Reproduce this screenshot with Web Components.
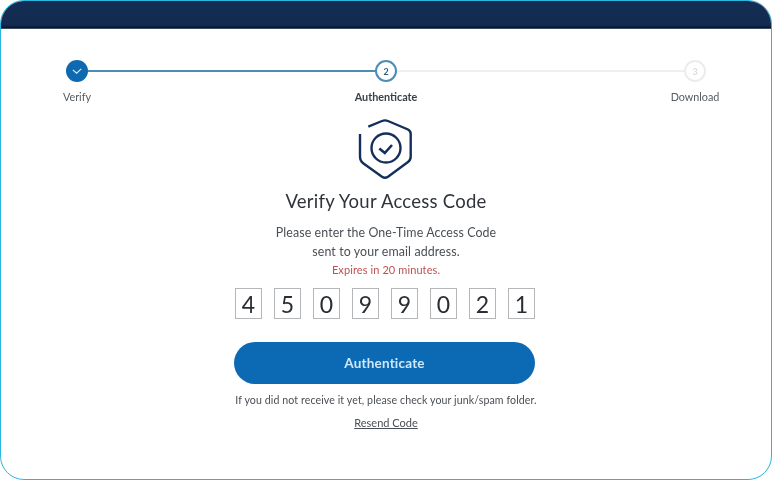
<!DOCTYPE html>
<html>
<head>
<meta charset="utf-8">
<style>
  html, body { margin: 0; height: 100%; background: #fff; }
  body { font-family: Lato, "Open Sans", sans-serif; color: #33383f; }
</style>
</head>
<body>
<verify-card>
  <step-bar></step-bar>
  <shield-icon></shield-icon>
  <code-intro></code-intro>
  <code-boxes code="45099021"></code-boxes>
  <auth-button>Authenticate</auth-button>
  <code-help></code-help>
</verify-card>

<script>
class VerifyCard extends HTMLElement {
    constructor() {
        super();
        this.attachShadow({mode: "open"}).innerHTML = `
        <style>
            :host {
                display: block;
                box-sizing: border-box;
                width: 772px;
                height: 480px;
                border: 1px solid #2bb6e0;
                border-radius: 24px;
                overflow: hidden;
                background: #fff;
            }
            .top {
                height: 28px;
                background: linear-gradient(#142d54 0, #132b50 24px, #04152f 27px, #6f8198 28px);
            }
            .content {
                display: flex;
                flex-direction: column;
                align-items: center;
                filter: blur(0.5px);
            }
        </style>
        <div class="top"></div>
        <div class="content"><slot></slot></div>`;
    }
}
customElements.define("verify-card", VerifyCard);

class StepBar extends HTMLElement {
    constructor() {
        super();
        this.attachShadow({mode: "open"}).innerHTML = `
        <style>
            :host {
                display: flex;
                box-sizing: border-box;
                width: 100%;
                height: 72px;
                padding: 31px 65px 0 65px;
                font-size: 10.8px;
                color: #555a60;
            }
            .step {
                width: 22px;
                display: flex;
                flex-direction: column;
                align-items: center;
                white-space: nowrap;
            }
            .dot {
                box-sizing: border-box;
                width: 22px;
                height: 22px;
                flex: none;
                border-radius: 50%;
                display: flex;
                align-items: center;
                justify-content: center;
                font-size: 9px;
                font-weight: 700;
            }
            .done { background: #0f69b0; }
            .now { border: 2px solid #4d8cb5; color: #2f5f85; background: #fff; }
            .later { border: 2px solid #ececec; color: #dcdcdc; background: #fff; }
            .label { margin-top: 9px; line-height: 12px; }
            .now + .label { font-weight: 700; color: #3a3f46; }
            .line { flex: 1; height: 2px; margin-top: 10px; }
            .blue { background: #4d8cb5; }
            .grey { background: #f0f0f0; }
        </style>
        <div class="step">
            <div class="dot done">
                <svg width="12" height="12" viewBox="0 0 12 12" fill="none" stroke="#dff1fb" stroke-width="1.1"><path d="M1.8 4.8 L5.6 8.2 L10.2 3.8"/></svg>
            </div>
            <div class="label">Verify</div>
        </div>
        <div class="line blue"></div>
        <div class="step">
            <div class="dot now">2</div>
            <div class="label">Authenticate</div>
        </div>
        <div class="line grey"></div>
        <div class="step">
            <div class="dot later">3</div>
            <div class="label">Download</div>
        </div>`;
    }
}
customElements.define("step-bar", StepBar);

class ShieldIcon extends HTMLElement {
    constructor() {
        super();
        this.attachShadow({mode: "open"}).innerHTML = `
        <style>
            :host { display: block; width: 56px; height: 62px; margin-top: 18px; }
            svg { display: block; }
        </style>
        <svg width="56" height="62" viewBox="0 0 56 62" fill="none" stroke="#142f5c" stroke-width="2.4">
            <path d="M10.3 7.7 L24 2 Q27 0.8 30 2 L50 10.5 Q52.7 12 52.7 15 L52.7 37.5 Q52.7 41 50 43 L30 57.8 Q27 59.8 24 57.8 L5.5 44.5 Q2 42 2 37.5 L2 15"/>
            <circle cx="28" cy="29" r="14.5"/>
            <path d="M21.3 29.5 L26.8 34 L34 26" stroke-width="2.6"/>
        </svg>`;
    }
}
customElements.define("shield-icon", ShieldIcon);

class CodeIntro extends HTMLElement {
    constructor() {
        super();
        this.attachShadow({mode: "open"}).innerHTML = `
        <style>
            :host { display: block; text-align: center; margin-top: 8px; }
            h1 { margin: 0; font-size: 18.5px; font-weight: 400; line-height: 24px; color: #2f343b; letter-spacing: 0.25px; }
            p { margin: 10px 0 0; font-size: 12.4px; line-height: 19px; color: #4a4f55; letter-spacing: 0.1px; }
            .exp { margin-top: 2px; font-size: 11px; line-height: 14px; color: #c0504f; letter-spacing: 0.1px; }
        </style>
        <h1>Verify Your Access Code</h1>
        <p>Please enter the One-Time Access Code<br>sent to your email address.</p>
        <div class="exp">Expires in 20 minutes.</div>`;
    }
}
customElements.define("code-intro", CodeIntro);

class CodeBoxes extends HTMLElement {
    constructor() {
        super();
        this.attachShadow({mode: "open"});
    }
    connectedCallback() {
        let boxes = this.getAttribute("code").split("").map(d => `<span>${d}</span>`).join("");
        this.shadowRoot.innerHTML = `
        <style>
            :host { display: flex; gap: 12px; margin: 11px 2px 0 0; }
            span {
                box-sizing: border-box;
                width: 27px;
                height: 31px;
                border: 1px solid #b4b6b8;
                display: flex;
                align-items: center;
                justify-content: center;
                font-size: 23px;
                color: #2a2d33;
            }
        </style>
        ${boxes}`;
    }
}
customElements.define("code-boxes", CodeBoxes);

class AuthButton extends HTMLElement {
    constructor() {
        super();
        this.attachShadow({mode: "open"}).innerHTML = `
        <style>
            :host {
                display: flex;
                align-items: center;
                justify-content: center;
                width: 301px;
                height: 42px;
                margin: 23px 3px 0 0;
                border-radius: 21px;
                background: #0c69b4;
                color: #cfe9fa;
                font-size: 13.5px;
                font-weight: 700;
                letter-spacing: 0.2px;
            }
        </style>
        <slot></slot>`;
    }
}
customElements.define("auth-button", AuthButton);

class CodeHelp extends HTMLElement {
    constructor() {
        super();
        this.attachShadow({mode: "open"}).innerHTML = `
        <style>
            :host { display: block; text-align: center; margin-top: 9px; font-size: 10.6px; color: #4a4f55; }
            p { margin: 0; line-height: 14px; letter-spacing: 0.1px; }
            a { display: inline-block; margin-top: 9px; font-size: 11px; line-height: 14px; color: inherit; text-decoration: underline; }
        </style>
        <p>If you did not receive it yet, please check your junk/spam folder.</p>
        <a>Resend Code</a>`;
    }
}
customElements.define("code-help", CodeHelp);
</script>
</body>
</html>
